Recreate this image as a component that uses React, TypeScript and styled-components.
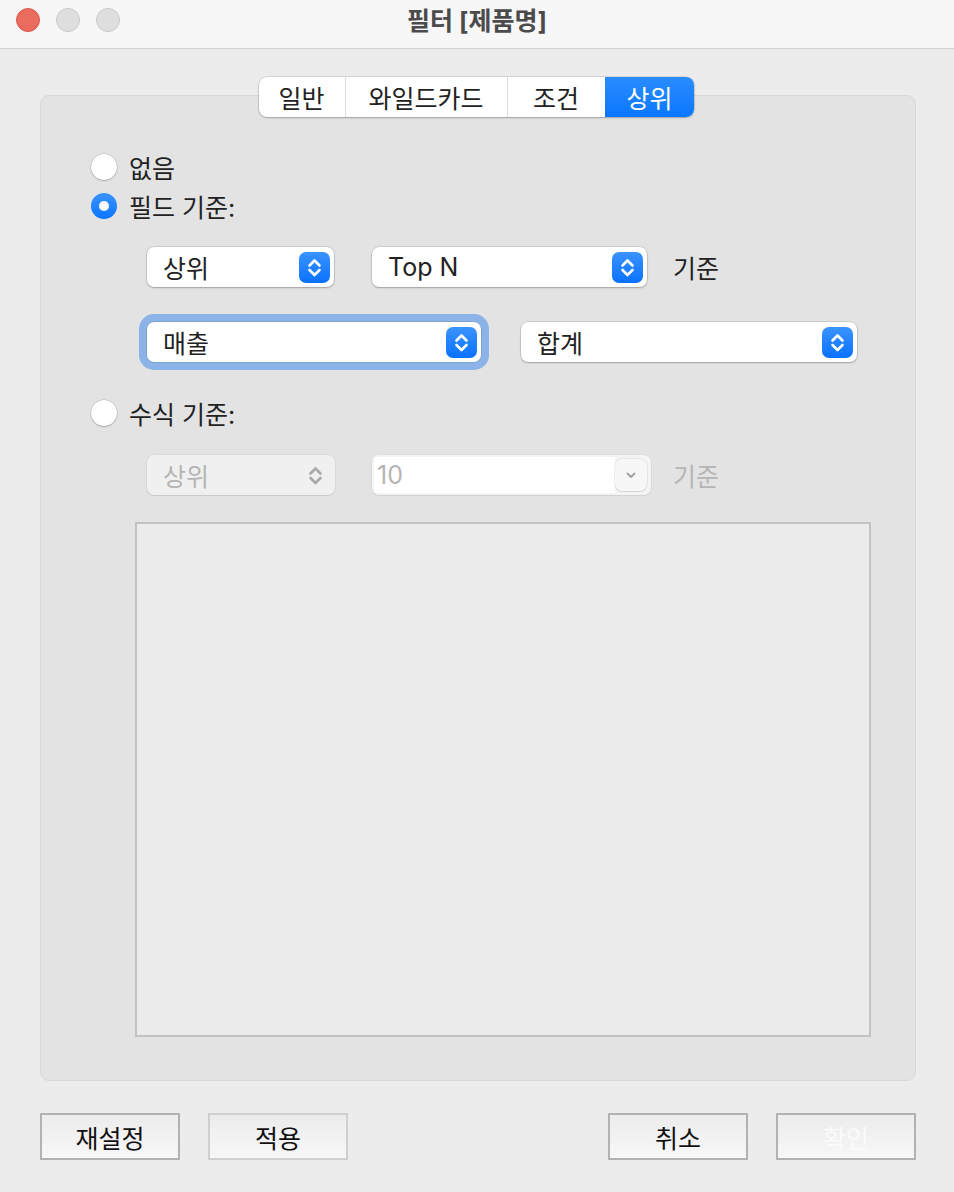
import styled, { createGlobalStyle, css } from "styled-components";

const GlobalStyle = createGlobalStyle`
  html, body {
    margin: 0;
    padding: 0;
    background: #ececec;
  }
  body {
    font-family: Inter, "Noto Sans CJK KR", "Noto Sans", sans-serif;
    font-size: 25px;
    color: #222;
  }
`;

const Window = styled.div`
  width: 954px;
  height: 1192px;
  display: flex;
  flex-direction: column;
  background: #ececec;
  overflow: hidden;
`;

const TitleBar = styled.div`
  height: 48px;
  flex-shrink: 0;
  display: flex;
  align-items: center;
  position: relative;
  background: #f7f7f7;
  border-bottom: 1px solid #d2d2d2;
`;

const Lights = styled.div`
  display: flex;
  gap: 16px;
  padding-left: 16px;
  margin-top: -8px;
`;

const Light = styled.span<{ $color: string; $edge: string }>`
  width: 24px;
  height: 24px;
  border-radius: 50%;
  box-sizing: border-box;
  background: ${(p) => p.$color};
  border: 1px solid ${(p) => p.$edge};
`;

const Title = styled.div`
  position: absolute;
  left: 0;
  right: 0;
  top: 1px;
  text-align: center;
  font-size: 25px;
  font-weight: 700;
  color: #4b4b4b;
  pointer-events: none;
`;

const Body = styled.div`
  flex: 1;
  display: flex;
  flex-direction: column;
  padding: 28px 38px 0 40px;
`;

const Tabs = styled.div`
  align-self: center;
  margin-left: -4px;
  display: flex;
  height: 40px;
  position: relative;
  z-index: 1;
  background: #fff;
  border-radius: 8px;
  box-shadow: 0 0 0 0.5px rgba(0, 0, 0, 0.18), 0 1px 2px rgba(0, 0, 0, 0.22);
  overflow: hidden;
`;

const Tab = styled.div<{ $w: number; $active?: boolean }>`
  width: ${(p) => p.$w}px;
  display: flex;
  align-items: center;
  justify-content: center;
  color: #222;
  & + & {
    border-left: 1px solid #dcdcdc;
  }
  ${(p) =>
    p.$active &&
    css`
      background: linear-gradient(#2b8cff, #0a77ff);
      color: #fff;
      border-left-color: transparent !important;
    `}
`;

const Group = styled.div`
  margin-top: -22px;
  height: 986px;
  box-sizing: border-box;
  display: flex;
  flex-direction: column;
  padding: 58px 0 0 50px;
  background: #e3e3e3;
  border: 1px solid #d8d8d8;
  border-radius: 9px;
`;

const RadioRow = styled.label<{ $gap: number }>`
  display: flex;
  align-items: center;
  gap: 12px;
  height: 26px;
  margin-top: ${(p) => p.$gap}px;
  color: #222;
`;

const RadioDot = styled.span<{ $on?: boolean }>`
  width: 26px;
  height: 26px;
  border-radius: 50%;
  box-sizing: border-box;
  display: flex;
  align-items: center;
  justify-content: center;
  ${(p) =>
    p.$on
      ? css`
          background: linear-gradient(#3a93ff, #0a75ff);
          &::after {
            content: "";
            width: 10px;
            height: 10px;
            border-radius: 50%;
            background: #fff;
          }
        `
      : css`
          background: #fff;
          box-shadow: 0 0 0 0.5px rgba(0, 0, 0, 0.2), 0 1px 1.5px rgba(0, 0, 0, 0.18);
        `}
`;

const Row = styled.div<{ $gap: number }>`
  display: flex;
  align-items: center;
  margin-top: ${(p) => p.$gap}px;
  margin-left: 56px;
`;

const Popup = styled.div<{ $w: number; $ml?: number; $focus?: boolean; $off?: boolean }>`
  width: ${(p) => p.$w}px;
  height: 40px;
  margin-left: ${(p) => p.$ml ?? 0}px;
  box-sizing: border-box;
  display: flex;
  align-items: center;
  justify-content: space-between;
  padding: 0 4px 0 16px;
  border-radius: 7px;
  background: ${(p) => (p.$off ? "#f0f0f0" : "#fff")};
  color: ${(p) => (p.$off ? "#b5b5b5" : "#222")};
  box-shadow: ${(p) =>
    p.$focus
      ? "0 0 0 0.5px rgba(0,0,0,0.2), 0 0 0 8px #8cb3e8"
      : p.$off
      ? "0 0 0 0.5px rgba(0,0,0,0.08), 0 1px 1px rgba(0,0,0,0.08)"
      : "0 0 0 0.5px rgba(0,0,0,0.18), 0 1px 2px rgba(0,0,0,0.22)"};
`;

const Stepper = styled.span<{ $off?: boolean }>`
  width: 31px;
  height: 31px;
  border-radius: 7px;
  display: flex;
  align-items: center;
  justify-content: center;
  background: ${(p) => (p.$off ? "transparent" : "linear-gradient(#3a93ff, #0a72ff)")};
`;

const Label = styled.span<{ $off?: boolean; $ml: number }>`
  margin-left: ${(p) => p.$ml}px;
  color: ${(p) => (p.$off ? "#b5b5b5" : "#222")};
`;

const Combo = styled.div`
  width: 279px;
  height: 40px;
  margin-left: 37px;
  box-sizing: border-box;
  display: flex;
  align-items: center;
  padding: 2px 4px 2px 2px;
  background: #f4f4f4;
  border-radius: 7px;
  box-shadow: 0 0 0 0.5px rgba(0, 0, 0, 0.06), 0 1px 1px rgba(0, 0, 0, 0.06);
`;

const ComboField = styled.div`
  flex: 1;
  height: 100%;
  display: flex;
  align-items: center;
  padding-left: 3px;
  background: #fff;
  color: #b5b5b5;
`;

const ComboButton = styled.span`
  width: 32px;
  height: 32px;
  display: flex;
  align-items: center;
  justify-content: center;
  border-radius: 7px;
  background: #f7f7f7;
  box-shadow: 0 0 0 0.5px rgba(0, 0, 0, 0.12), 0 1px 1px rgba(0, 0, 0, 0.08);
`;

const TextArea = styled.div`
  width: 736px;
  height: 515px;
  margin: 27px 0 0 44px;
  box-sizing: border-box;
  background: #ebebeb;
  border: 2px solid #c2c2c2;
`;

const Footer = styled.div`
  display: flex;
  align-items: center;
  justify-content: space-between;
  margin-top: 32px;
`;

const ButtonGroup = styled.div`
  display: flex;
  gap: 28px;
`;

const Button = styled.button<{ $light?: boolean; $dim?: boolean }>`
  width: 140px;
  height: 47px;
  box-sizing: border-box;
  border: 2px solid ${(p) => (p.$light ? "#cfcfcf" : "#b2b2b2")};
  background: linear-gradient(#ececec, #f7f7f7);
  font-family: "Noto Sans CJK KR", "Noto Sans", sans-serif;
  font-size: 25px;
  color: ${(p) => (p.$dim ? "#fbfbfb" : "#111")};
  padding: 0;
`;

const Chevrons = ({ color }: { color: string }) => (
  <svg width="31" height="31" viewBox="0 0 31 31" fill="none">
    <path
      d="M10.5 13.5 L15.5 8.5 L20.5 13.5 M10.5 18 L15.5 23 L20.5 18"
      stroke={color}
      strokeWidth="2.6"
      strokeLinecap="round"
      strokeLinejoin="round"
    />
  </svg>
);

const ChevronDown = () => (
  <svg width="16" height="16" viewBox="0 0 16 16" fill="none">
    <path d="M4.5 6.5 L8 10 L11.5 6.5" stroke="#a3a3a3" strokeWidth="2" strokeLinecap="round" strokeLinejoin="round" />
  </svg>
);

const tabs = [
  { name: "일반", w: 86 },
  { name: "와일드카드", w: 161 },
  { name: "조건", w: 97 },
  { name: "상위", w: 88 },
];

const App = () => {
  return (
    <Window>
      <GlobalStyle />
      <TitleBar>
        <Lights>
          <Light $color="#ec6b5f" $edge="#d65a4f" />
          <Light $color="#dedede" $edge="#c8c8c8" />
          <Light $color="#dedede" $edge="#c8c8c8" />
        </Lights>
        <Title>필터 [제품명]</Title>
      </TitleBar>
      <Body>
        <Tabs>
          {tabs.map((t) => (
            <Tab key={t.name} $w={t.w} $active={t.name === "상위"}>
              {t.name}
            </Tab>
          ))}
        </Tabs>
        <Group>
          <RadioRow $gap={0}>
            <RadioDot />
            없음
          </RadioRow>
          <RadioRow $gap={13}>
            <RadioDot $on />
            필드 기준:
          </RadioRow>
          <Row $gap={28}>
            <Popup $w={187}>
              상위
              <Stepper>
                <Chevrons color="#fff" />
              </Stepper>
            </Popup>
            <Popup $w={275} $ml={38}>
              Top N
              <Stepper>
                <Chevrons color="#fff" />
              </Stepper>
            </Popup>
            <Label $ml={26}>기준</Label>
          </Row>
          <Row $gap={35}>
            <Popup $w={334} $focus>
              매출
              <Stepper>
                <Chevrons color="#fff" />
              </Stepper>
            </Popup>
            <Popup $w={336} $ml={40}>
              합계
              <Stepper>
                <Chevrons color="#fff" />
              </Stepper>
            </Popup>
          </Row>
          <RadioRow $gap={38}>
            <RadioDot />
            수식 기준:
          </RadioRow>
          <Row $gap={29}>
            <Popup $w={188} $off>
              상위
              <Stepper $off>
                <Chevrons color="#a8a8a8" />
              </Stepper>
            </Popup>
            <Combo>
              <ComboField>10</ComboField>
              <ComboButton>
                <ChevronDown />
              </ComboButton>
            </Combo>
            <Label $off $ml={22}>
              기준
            </Label>
          </Row>
          <TextArea />
        </Group>
        <Footer>
          <ButtonGroup>
            <Button>재설정</Button>
            <Button $light>적용</Button>
          </ButtonGroup>
          <ButtonGroup>
            <Button>취소</Button>
            <Button $dim>확인</Button>
          </ButtonGroup>
        </Footer>
      </Body>
    </Window>
  );
};

export default App;
